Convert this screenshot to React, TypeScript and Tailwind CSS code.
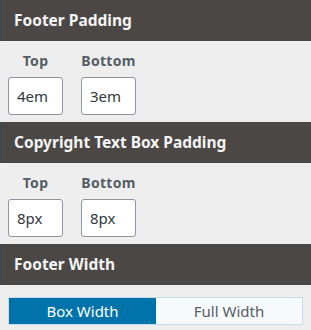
import React from "react";

const font = { fontFamily: '"Noto Sans", "Open Sans", sans-serif' };

function Header({ title }: { title: string }) {
  return (
    <div className="h-[41px] bg-[#4b4745] border-l border-l-[#3a4a55] flex items-center pl-[13px]">
      <span className="text-[15.5px] font-bold text-[#f4f4f4]">{title}</span>
    </div>
  );
}

function Field({ label, value }: { label: string; value: string }) {
  return (
    <div className="flex flex-col items-center gap-[8px]">
      <span className="text-[14px] font-bold text-[#555d66] leading-[17px] tracking-[0.3px]">{label}</span>
      <div className="w-[55px] h-[38px] bg-white border border-[#8d96a0] rounded-[3px] flex items-center pl-[8px] text-[15px] text-[#32373c]">
        {value}
      </div>
    </div>
  );
}

function Pair({ top, bottom }: { top: string; bottom: string }) {
  return (
    <div className="flex gap-[18px] pl-[8px] pt-[11px] pb-[7px]">
      <Field label="Top" value={top} />
      <Field label="Bottom" value={bottom} />
    </div>
  );
}

export default function App() {
  return (
    <div className="w-[311px] h-[330px] bg-[#eeeeee] overflow-hidden" style={font}>
      <Header title="Footer Padding" />
      <Pair top="4em" bottom="3em" />
      <Header title="Copyright Text Box Padding" />
      <Pair top="8px" bottom="8px" />
      <Header title="Footer Width" />
      <div className="px-[8px] pt-[12px]">
        <div className="flex h-[28px] border border-[#c5dcec]">
          <div className="w-[147px] bg-[#0073aa] text-white text-[15px] flex items-center justify-center">Box Width</div>
          <div className="flex-1 bg-[#f7fafc] text-[#555d66] text-[15px] flex items-center justify-center">Full Width</div>
        </div>
      </div>
    </div>
  );
}
